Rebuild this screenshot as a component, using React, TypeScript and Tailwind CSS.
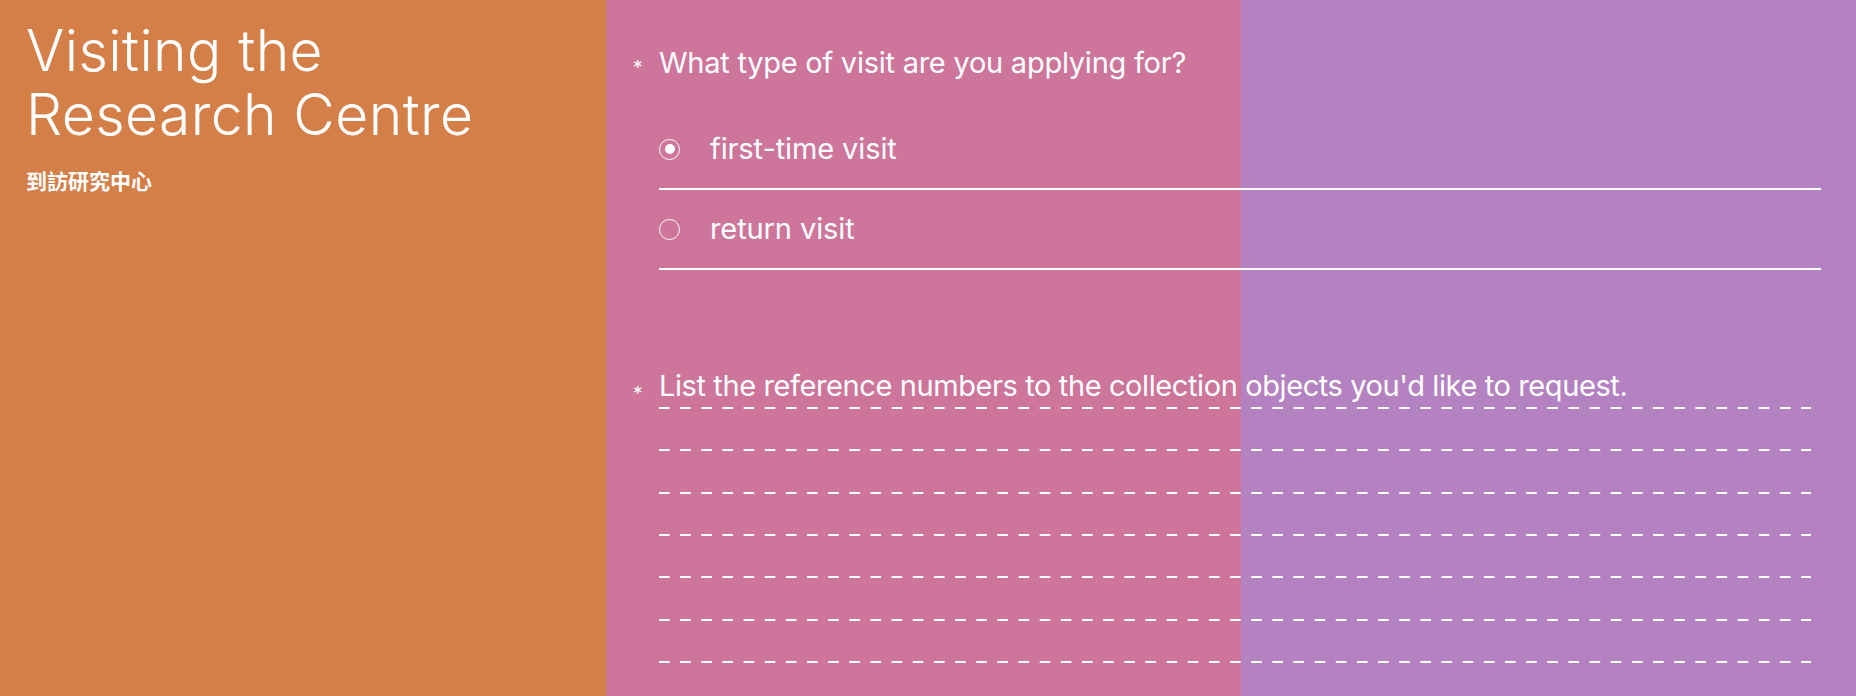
import React, { useState } from "react";

const options = [
  { id: "first", label: "first-time visit" },
  { id: "return", label: "return visit" },
];

// gaps before each dashed line, kept whole so the dashes land on full pixels
const dashGaps = ["mt-[3px]", "mt-[40px]", "mt-[41px]", "mt-[40px]", "mt-[40px]", "mt-[41px]", "mt-[40px]"];

function Radio({ checked }: { checked: boolean }) {
  return (
    <span className="flex items-center justify-center w-[21px] h-[21px] rounded-full border-[1.5px] border-white shrink-0">
      {checked && <span className="w-[10px] h-[10px] rounded-full bg-white" />}
    </span>
  );
}

function DashLine({ className }: { className: string }) {
  return (
    <svg width="1152" height="2" className={"block " + className}>
      <line x1="0" y1="1" x2="1152" y2="1" stroke="#fff" strokeWidth="2" strokeDasharray="10.6 10.55" />
    </svg>
  );
}

export default function App() {
  const [visit, setVisit] = useState("first");

  return (
    <div
      className="flex w-full h-[696px] overflow-hidden text-white"
      style={{ fontFamily: "Inter, 'Noto Sans', sans-serif" }}
    >
      {/* left panel */}
      <div className="w-[606px] shrink-0 bg-[#d47e48] pl-[26px] pt-[19px]">
        <h1 className="text-[57px] leading-[64px] font-light tracking-[0.4px]">
          Visiting the
          <br />
          Research Centre
        </h1>
        <p
          className="mt-[23px] text-[21px] leading-[20px] font-bold"
          style={{ fontFamily: "'Noto Sans CJK TC', 'Noto Sans CJK SC', sans-serif" }}
        >
          到訪研究中心
        </p>
      </div>

      {/* form */}
      <div className="flex-1 bg-[linear-gradient(to_right,#cd759b_0px,#cd759b_635px,#b482c0_635px)] pl-[27px] pr-[35px] pt-[45px]">
        <div className="flex">
          <span className="w-[26px] shrink-0 pt-[13px] text-[19px] leading-none">*</span>
          <span className="text-[29px] leading-[36px] tracking-[-0.25px]">
            What type of visit are you applying for?
          </span>
        </div>

        <div className="ml-[26px] mt-[29px]">
          {options.map((o) => (
            <label
              key={o.id}
              onClick={() => setVisit(o.id)}
              className="flex items-center h-[80px] border-b-2 border-white cursor-pointer"
            >
              <Radio checked={visit === o.id} />
              <span className="ml-[30px] text-[29px] leading-[36px] tracking-[-0.1px]">
                {o.label}
              </span>
            </label>
          ))}
        </div>

        <div className="flex mt-[98px]">
          <span className="w-[26px] shrink-0 pt-[16px] text-[19px] leading-none">*</span>
          <span className="text-[29px] leading-[36px] tracking-[-0.4px] whitespace-nowrap">
            List the reference numbers to the collection objects you'd like to request.
          </span>
        </div>

        <div className="ml-[26px] flex flex-col">
          {dashGaps.map((g, i) => (
            <DashLine key={i} className={g} />
          ))}
        </div>
      </div>
    </div>
  );
}
